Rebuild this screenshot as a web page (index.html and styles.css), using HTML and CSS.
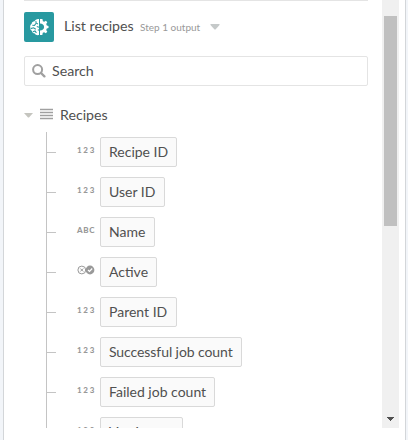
FILE: index.html
```
<!DOCTYPE html>
<html lang="en">
<head>
<meta charset="utf-8">
<title>Recipe data</title>
<link rel="stylesheet" href="styles.css">
</head>
<body>
<div class="panel">
  <div class="viewport">
    <main class="content">
      <header class="step">
        <span class="logo">
          <svg width="30" height="30" viewBox="0 0 30 30">
            <g fill="#fff">
              <path d="M15 7v16c-1.800.5-3.700-.3-4.200-1.500-1.600 0-2.700-1.100-2.700-2.500C6.500 18.200 6 17 6.300 15.500c-.5-1.500.2-2.900 1.300-3.500.1-1.700 1.400-2.700 2.900-2.700.6-1.600 2.500-2.700 4.500-2.300z"/>
              <path d="M16 7h2.400l.5 2.200 1.300.6 1.700-1.100 1.400 1.500-1.100 1.700.6 1.500 1.700.5v2.200l-1.700.5-.6 1.400 1.100 1.800-1.500 1.500-1.700-1.100-1.300.6-.5 2.200H16v-4.500c2.400 0 4.100-1.400 4.100-3.500S18.400 11.500 16 11.500z"/>
            </g>
            <path d="M8.300 13.200l2.200.3 1.200-1.900M6.700 16.600l2.800-.8 2.300 1.500M9 19.700l2-.8 1.400 1.900M11.800 9.200l.4 2 1.800.8M12.800 14.400l2.200.8M13.800 18.300l1.400-.6" fill="none" stroke="#2899a0" stroke-width="1.100"/>
          </svg>
        </span>
        <span class="step-name">List recipes</span>
        <span class="step-note">Step 1 output</span>
        <svg class="step-caret" width="10" height="6" viewBox="0 0 10 6"><path d="M.5 0h9v1L5.500 5.500h-1L.5 1z" fill="#c5c9c9"/></svg>
      </header>
      <div class="search">
        <svg width="14" height="14" viewBox="0 0 14 14" fill="none" stroke="#a0a0a0"><circle cx="5.600" cy="5.600" r="4.500" stroke-width="2"/><path d="M9 9l3.400 3.400" stroke-width="2.300" stroke-linecap="round"/></svg>
        <span>Search</span>
      </div>
      <div class="group">
        <svg class="group-caret" width="9" height="5" viewBox="0 0 9 5"><path d="M0 0h9L5 4.500H4z" fill="#c5c5bf"/></svg>
        <svg class="group-list" width="13" height="12" viewBox="0 0 13 12"><path fill="#e8e8e8" d="M0 0h13v12H0z"/><path d="M0 1.500h13M0 4.500h13M0 7.500h13M0 10.500h13" stroke="#a0a0a0"/></svg>
        <span>Recipes</span>
      </div>
      <ul class="tree">
        <li><i class="kind">123</i><span class="pill">Recipe ID</span></li>
        <li><i class="kind">123</i><span class="pill short">User ID</span></li>
        <li><i class="kind alpha">ABC</i><span class="pill short">Name</span></li>
        <li><i class="kind"><svg width="18" height="10" viewBox="0 0 18 10"><circle cx="4.800" cy="5" r="3.900" fill="none" stroke="#999"/><path d="M3.300 3.500l3 3m0-3l-3 3" stroke="#999"/><circle cx="13" cy="5" r="4.400" fill="#999"/><path d="M11 5l1.500 1.500 2.700-3" fill="none" stroke="#fff" stroke-width="1.200"/></svg></i><span class="pill">Active</span></li>
        <li><i class="kind">123</i><span class="pill short">Parent ID</span></li>
        <li><i class="kind">123</i><span class="pill wide">Successful job count</span></li>
        <li><i class="kind">123</i><span class="pill">Failed job count</span></li>
        <li><i class="kind">123</i><span class="pill wide">Version no</span></li>
      </ul>
    </main>
    <div class="scrollbar">
      <div class="thumb"></div>
      <svg class="down" width="7" height="4" viewBox="0 0 7 4"><path d="M0 0h7v1H6v1H5v1H4v1H3V3H2V2H1V1H0z" fill="#505050"/></svg>
    </div>
  </div>
</div>
</body>
</html>
```
FILE: styles.css
```
* { box-sizing: border-box; }
body {
  margin: 0;
  height: 440px;
  padding: 0 2px 0 3px;
  overflow: hidden;
  background: #f2f5f9;
  color: #505050;
  font: 14.2px/20px Lato, "Liberation Sans", sans-serif;
}
.panel {
  height: 440px;
  background: #fff;
  border: solid #d3d6d9;
  border-width: 0 1px;
}
.viewport {
  display: flex;
  justify-content: space-between;
  height: 428px;
  padding: 0 6px 0 20px;
  overflow: hidden;
}
.content { width: 344px; flex: none; }
.step {
  display: flex;
  align-items: center;
  height: 52px;
  border-top: 1px solid #e4e4e4;
}
.logo {
  width: 30px;
  height: 30px;
  border-radius: 2px;
  background: #2899a0;
}
.logo svg { display: block; }
.step-name { width: 69px; margin: -1px 0 0 10px; white-space: nowrap; }
.step-note {
  width: 59px;
  margin: 1px 0 0 7px;
  color: #999;
  font-size: 10px;
  white-space: nowrap;
}
.step-caret { margin-left: 11px; }
.search {
  display: flex;
  align-items: center;
  gap: 6px;
  height: 30px;
  margin-top: 4px;
  padding-left: 7px;
  border: 1px solid #e4e4e4;
  border-radius: 2px;
}
.group {
  display: flex;
  align-items: center;
  height: 20px;
  margin-top: 19px;
}
.group-list { margin: -3px 7px 0; }
.tree {
  list-style: none;
  margin: 7px 0 0 22px;
  padding: 0;
  border-left: 1px solid #c4c4c4;
}
.tree li {
  display: flex;
  height: 40px;
  padding-top: 5px;
}
.tree li::before {
  content: "";
  width: 9px;
  height: 1px;
  margin-top: 15px;
  background: #c4c4c4;
}
.kind {
  width: 22px;
  margin: 8px 1px 0 21px;
  color: #999;
  font: normal 900 8px/10px Lato, sans-serif;
  letter-spacing: 1.7px;
}
.kind.alpha { letter-spacing: .7px; }
.kind svg { display: block; }
.pill {
  height: 30px;
  padding: 0 8px;
  border: 1px solid #d9d9d9;
  border-radius: 2px;
  background: #fafafa;
  font-size: 14px;
  line-height: 28px;
  white-space: nowrap;
}
.pill.short { padding-right: 9px; }
.pill.wide { letter-spacing: -.08px; }
.scrollbar {
  display: flex;
  flex-direction: column;
  align-items: center;
  width: 17px;
  padding: 16px 0 7px;
  background: #f0f0f0;
}
.thumb {
  width: 13px;
  height: 210px;
  background: #c0c0c0;
}
.down { margin-top: auto; }
```
